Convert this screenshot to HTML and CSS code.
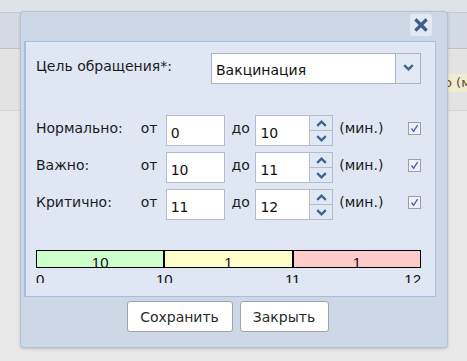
FILE: index.html
```html
<!DOCTYPE html>
<html lang="ru">
<head>
<meta charset="utf-8">
<title>Цель обращения</title>
<link rel="stylesheet" href="styles.css">
</head>
<body>
<div class="page">
  <div class="topstrip"></div>
  <div class="toolbar"></div>
  <div class="gridrow"><span class="cell">до (мин.)</span></div>
</div>

<div class="dialog">
  <div class="dlg-head">
    <button class="close" type="button" aria-label="Закрыть">
      <svg width="14" height="14" viewBox="0 0 14 14"><path d="M2.5 2.5 L11.5 11.5 M11.5 2.5 L2.5 11.5" stroke="#3d5b88" stroke-width="3.2" stroke-linecap="square" fill="none"/></svg>
    </button>
  </div>
  <div class="panel">
    <div class="goal">
      <span class="goal-label">Цель обращения*:</span>
      <div class="select">
        <span class="select-value">Вакцинация</span>
        <span class="select-btn"><svg width="11" height="7" viewBox="0 0 11 7"><path d="M1.2 1.2 L5.5 5.3 L9.8 1.2" stroke="#3e6496" stroke-width="2.4" fill="none"/></svg></span>
      </div>
    </div>

    <div class="rows">
      <div class="row">
        <span class="lbl">Нормально:</span>
        <span class="from">от</span>
        <span class="input">0</span>
        <span class="to">до</span>
        <span class="spin"><span class="spin-val">10</span><span class="spin-btns"><span class="up"><svg width="11" height="7" viewBox="0 0 11 7"><path d="M1.2 5.8 L5.5 1.7 L9.8 5.8" stroke="#3e6496" stroke-width="2.4" fill="none"/></svg></span><span class="down"><svg width="11" height="7" viewBox="0 0 11 7"><path d="M1.2 1.2 L5.5 5.3 L9.8 1.2" stroke="#3e6496" stroke-width="2.4" fill="none"/></svg></span></span></span>
        <span class="unit">(мин.)</span>
        <span class="check"><svg width="13" height="13" viewBox="0 0 13 13"><rect x="0.5" y="0.5" width="12" height="12" fill="#eef2f8" stroke="#9a9ea6"/><path d="M3.5 6.5 L5.6 9.3 L9.6 3.2" stroke="#4a63a8" stroke-width="1.4" fill="none"/></svg></span>
      </div>
      <div class="row">
        <span class="lbl">Важно:</span>
        <span class="from">от</span>
        <span class="input">10</span>
        <span class="to">до</span>
        <span class="spin"><span class="spin-val">11</span><span class="spin-btns"><span class="up"><svg width="11" height="7" viewBox="0 0 11 7"><path d="M1.2 5.8 L5.5 1.7 L9.8 5.8" stroke="#3e6496" stroke-width="2.4" fill="none"/></svg></span><span class="down"><svg width="11" height="7" viewBox="0 0 11 7"><path d="M1.2 1.2 L5.5 5.3 L9.8 1.2" stroke="#3e6496" stroke-width="2.4" fill="none"/></svg></span></span></span>
        <span class="unit">(мин.)</span>
        <span class="check"><svg width="13" height="13" viewBox="0 0 13 13"><rect x="0.5" y="0.5" width="12" height="12" fill="#eef2f8" stroke="#9a9ea6"/><path d="M3.5 6.5 L5.6 9.3 L9.6 3.2" stroke="#4a63a8" stroke-width="1.4" fill="none"/></svg></span>
      </div>
      <div class="row">
        <span class="lbl">Критично:</span>
        <span class="from">от</span>
        <span class="input">11</span>
        <span class="to">до</span>
        <span class="spin"><span class="spin-val">12</span><span class="spin-btns"><span class="up"><svg width="11" height="7" viewBox="0 0 11 7"><path d="M1.2 5.8 L5.5 1.7 L9.8 5.8" stroke="#3e6496" stroke-width="2.4" fill="none"/></svg></span><span class="down"><svg width="11" height="7" viewBox="0 0 11 7"><path d="M1.2 1.2 L5.5 5.3 L9.8 1.2" stroke="#3e6496" stroke-width="2.4" fill="none"/></svg></span></span></span>
        <span class="unit">(мин.)</span>
        <span class="check"><svg width="13" height="13" viewBox="0 0 13 13"><rect x="0.5" y="0.5" width="12" height="12" fill="#eef2f8" stroke="#9a9ea6"/><path d="M3.5 6.5 L5.6 9.3 L9.6 3.2" stroke="#4a63a8" stroke-width="1.4" fill="none"/></svg></span>
      </div>
    </div>

    <div class="scale">
      <div class="bar">
        <div class="seg green">10</div>
        <div class="seg yellow">1</div>
        <div class="seg red">1</div>
      </div>
      <div class="ticks">
        <span class="tick first">0</span>
        <span class="tick mid" style="left:33.33%">10</span>
        <span class="tick mid" style="left:66.67%">11</span>
        <span class="tick last">12</span>
      </div>
    </div>
  </div>
  <div class="actions">
    <button class="btn btn-save" type="button">Сохранить</button>
    <button class="btn btn-close" type="button">Закрыть</button>
  </div>
</div>
</body>
</html>
```

FILE: styles.css
```css
* { box-sizing: border-box; }

html, body {
  margin: 0;
  padding: 0;
}

body {
  width: 467px;
  height: 361px;
  overflow: hidden;
  position: relative;
  background: #e8e8e8;
  font-family: "DejaVu Sans", "Noto Sans", sans-serif;
  color: #1b1b1b;
}

/* background page */
.page {
  width: 100%;
  overflow: hidden;
}

.topstrip {
  height: 13px;
  background: #dee3ea;
  border-bottom: 1px solid #c4ccd6;
}

.toolbar {
  height: 36px;
  background: #d3dae2;
  border-bottom: 1px solid #bcc4ce;
}

.gridrow {
  height: 62px;
  background: #e3e3e3;
  border-bottom: 1px solid #d6d6d6;
  padding-top: 23px;
  padding-left: 431px;
  overflow: hidden;
  white-space: nowrap;
}

.cell {
  display: inline-block;
  background: #f2eccf;
  color: #5e4e36;
  font-size: 13px;
  line-height: 18px;
  padding: 0 4px;
  white-space: nowrap;
}

/* dialog window */
.dialog {
  position: absolute;
  left: 20px;
  top: 11px;
  width: 428px;
  height: 337px;
  background: #cdd8e6;
  border: 1px solid #b3c1d3;
  border-radius: 4px;
  box-shadow: 0 1px 3px rgba(0, 0, 0, 0.18);
  display: flex;
  flex-direction: column;
  padding: 2px 11px 0 3px;
}

.dlg-head {
  height: 27px;
  display: flex;
  justify-content: flex-end;
  padding-right: 4px;
}

.close {
  width: 22px;
  height: 22px;
  border: none;
  padding: 0;
  margin: 0;
  background: #e1e9f4;
  border-radius: 3px;
  display: flex;
  align-items: center;
  justify-content: center;
}

.panel {
  height: 256px;
  background: #dee7f3;
  border: 1px solid #a3bfe3;
  border-left-width: 2px;
  padding: 11px 14px 0 10px;
  display: flex;
  flex-direction: column;
}

.goal {
  display: flex;
  align-items: center;
  height: 31px;
}

.goal-label {
  width: 175px;
  font-size: 14px;
  align-self: flex-start;
  padding-top: 5px;
}

.select {
  width: 210px;
  height: 31px;
  background: #fff;
  border: 1px solid #a9b4c4;
  display: flex;
}

.select-value {
  flex: 1;
  font-size: 14px;
  padding: 8px 0 0 4px;
  color: #111;
}

.select-btn {
  width: 25px;
  border-left: 1px solid #a9b4c4;
  background: #e2e9f3;
  display: flex;
  align-items: center;
  justify-content: center;
  padding-bottom: 3px;
}

.rows {
  margin-top: 31px;
  display: flex;
  flex-direction: column;
  gap: 6px;
}

.row {
  display: flex;
  align-items: center;
  height: 31px;
  font-size: 14px;
}

.lbl {
  width: 105px;
  align-self: flex-start;
  padding-top: 5px;
}

.from {
  width: 25px;
  align-self: flex-start;
  padding-top: 5px;
}

.input {
  width: 60px;
  height: 31px;
  background: #fff;
  border: 1px solid #b6bccb;
  padding: 9px 0 0 4px;
  font-size: 14px;
  color: #111;
}

.to {
  width: 30px;
  padding-left: 6px;
  align-self: flex-start;
  padding-top: 5px;
}

.spin {
  width: 78px;
  height: 31px;
  background: #fff;
  border: 1px solid #b6bccb;
  display: flex;
}

.spin-val {
  flex: 1;
  padding: 9px 0 0 4px;
  font-size: 14px;
  color: #111;
}

.spin-btns {
  width: 23px;
  border-left: 1px solid #b6bccb;
  background: #e0e8f3;
  display: flex;
  flex-direction: column;
}

.spin-btns .up,
.spin-btns .down {
  flex: 1;
  display: flex;
  align-items: center;
  justify-content: center;
}

.spin-btns .down {
  border-top: 1px solid #b6bccb;
}

.unit {
  width: 75px;
  padding-left: 6px;
  align-self: flex-start;
  padding-top: 5px;
}

.check {
  width: 13px;
  height: 13px;
  display: flex;
  align-self: flex-start;
  margin-top: 7px;
}

/* scale */
.scale {
  margin-top: 30px;
}

.bar {
  height: 18px;
  border: 1px solid #000;
  display: flex;
  font-family: "Liberation Sans", Arial, sans-serif;
  font-size: 15px;
}

.seg {
  flex: 1;
  height: 16px;
  overflow: hidden;
  text-align: center;
  line-height: 17px;
  padding-top: 3px;
  color: #111;
}

.seg + .seg {
  border-left: 2px solid #000;
}

.green { background: #ccffcc; }
.yellow { background: #ffffcc; }
.red { background: #ffcccc; }

.ticks {
  position: relative;
  height: 15px;
  overflow: hidden;
  font-family: "Liberation Sans", Arial, sans-serif;
  font-size: 15px;
  line-height: 17px;
  color: #111;
}

.tick {
  position: absolute;
  top: 3px;
}

.tick.first { left: 0; }
.tick.mid { transform: translateX(-50%); }
.tick.last { right: 0; }

/* buttons */
.actions {
  display: flex;
  justify-content: center;
  gap: 7px;
  padding-top: 4px;
  padding-right: 5px;
}

.btn {
  height: 31px;
  background: #fff;
  border: 1px solid #a3a3a3;
  border-radius: 3px;
  font-family: "DejaVu Sans", sans-serif;
  font-size: 14px;
  color: #2a2a2a;
  padding: 0;
}

.btn-save { width: 106px; }
.btn-close { width: 89px; }
```
